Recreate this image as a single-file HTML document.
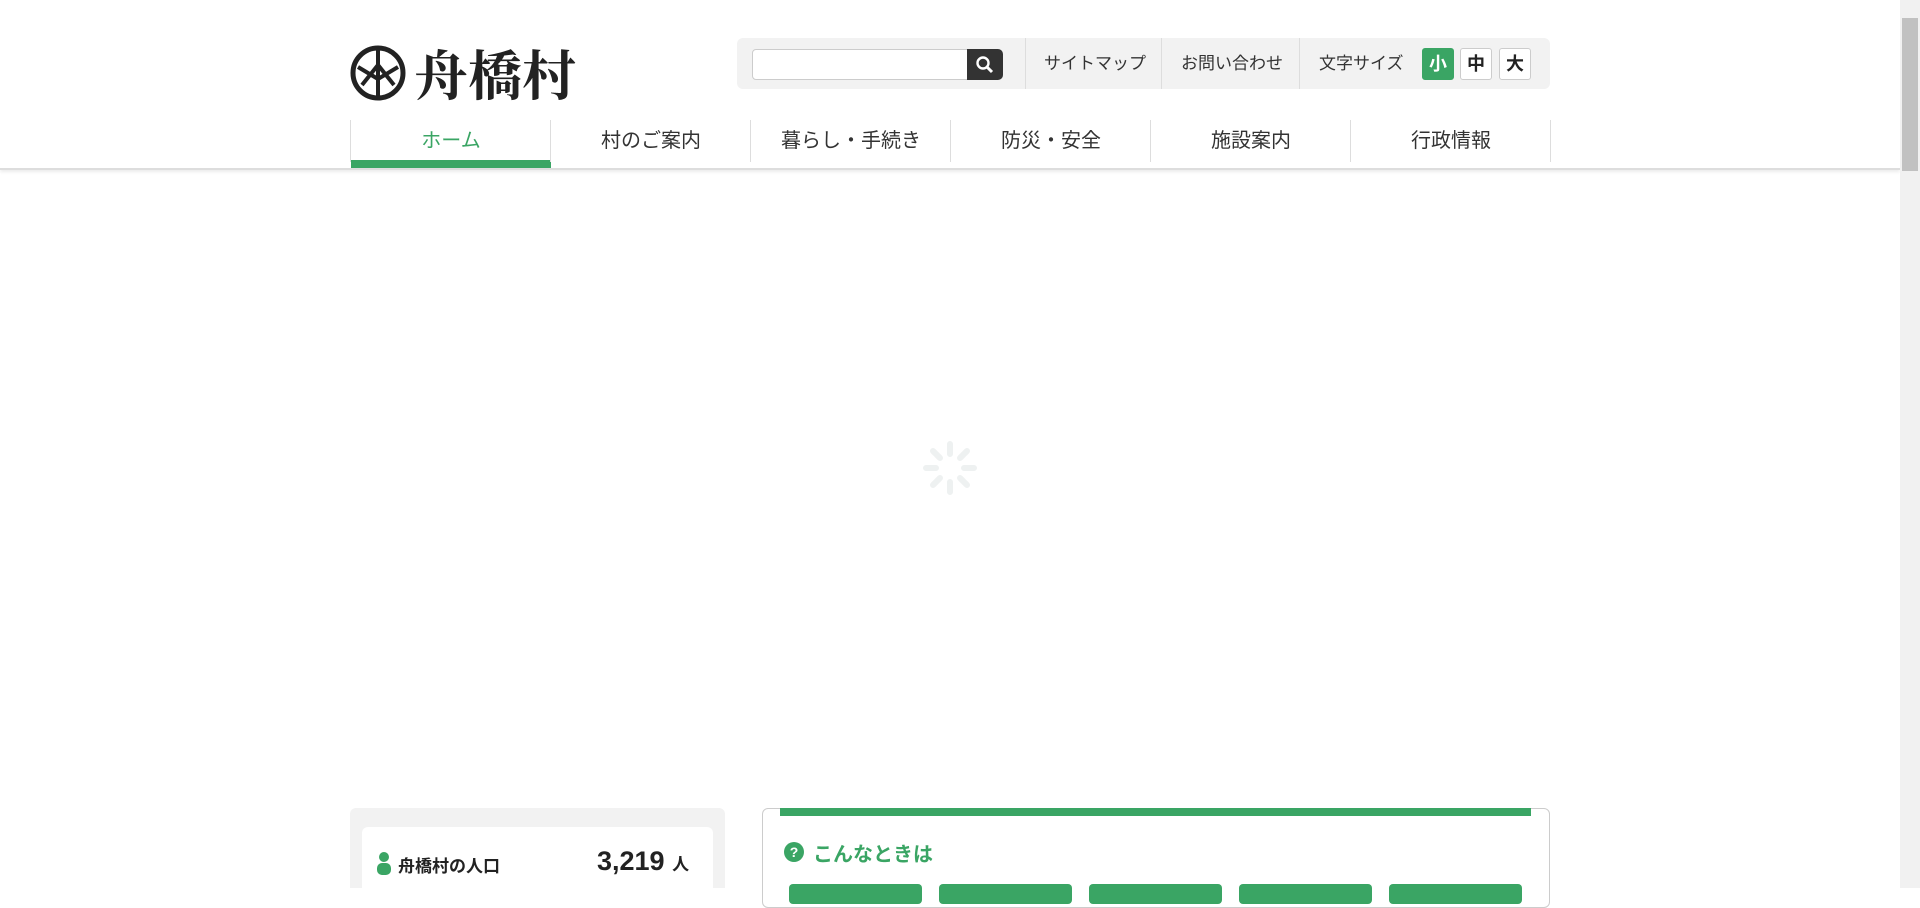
<!DOCTYPE html>
<html><head><meta charset="utf-8"><style>
*{margin:0;padding:0;box-sizing:border-box}
body{width:1920px;height:888px;overflow:hidden;background:#fff;font-family:"Liberation Sans","Noto Sans CJK JP",sans-serif;color:#333;position:relative}
.a{position:absolute}
.hdr{left:0;top:0;width:1900px;height:170px;border-bottom:2px solid #ddd;box-shadow:0 2px 3px rgba(0,0,0,.08)}
.logo{left:350px;top:34px;font-family:"Noto Serif CJK SC",serif;font-size:54px;font-weight:700;color:#222;display:flex;align-items:center;gap:8px;letter-spacing:0px}
.util{left:737px;top:38px;width:813px;height:51px;background:#f2f2f2;border-radius:6px}
.inp{left:752px;top:49px;width:216px;height:31px;background:#fff;border:1px solid #ccc;border-radius:4px 0 0 4px}
.sbtn{left:967px;top:49px;width:36px;height:31px;background:#333;border-radius:0 5px 5px 0}
.div{top:38px;width:1px;height:51px;background:#ddd}
.ut{top:49px;font-size:17px;color:#333}
.fb{top:48px;width:32px;height:32px;border:1px solid #ccc;background:#fff;border-radius:3px;font-weight:bold;font-size:18px;text-align:center;line-height:30px;color:#222}
.nav{top:123px;height:48px;font-size:20px;text-align:center;line-height:36px}
.ns{top:120px;width:1px;height:42px;background:#ddd}
</style></head><body>
<div class="a hdr"></div>
<div class="a logo"><svg width="56" height="56" viewBox="0 0 56 56"><circle cx="28" cy="28" r="25" fill="none" stroke="#222" stroke-width="5"/><path d="M28 5 L28 51 M8 22 L28 34 L48 22 M12 40 L28 20 L44 40" stroke="#222" stroke-width="4" fill="none"/></svg><span>舟橋村</span></div>
<div class="a util"></div>
<div class="a inp"></div>
<div class="a sbtn"><svg width="36" height="31" viewBox="0 0 36 31"><circle cx="16" cy="14" r="5.5" fill="none" stroke="#fff" stroke-width="2.4"/><path d="M20 18 L25 23" stroke="#fff" stroke-width="3"/></svg></div>
<div class="a div" style="left:1025px"></div>
<div class="a ut" style="left:1044px">サイトマップ</div>
<div class="a div" style="left:1161px"></div>
<div class="a ut" style="left:1181px">お問い合わせ</div>
<div class="a div" style="left:1299px"></div>
<div class="a ut" style="left:1319px">文字サイズ</div>
<div class="a fb" style="left:1422px;background:#3aa564;border-color:#3aa564;color:#fff">小</div>
<div class="a fb" style="left:1460px">中</div>
<div class="a fb" style="left:1499px">大</div>
<div class="a ns" style="left:350px"></div>
<div class="a nav" style="left:351px;width:200px;color:#3aa564">ホーム</div>
<div class="a" style="left:351px;top:160px;width:200px;height:8px;background:#3aa564"></div>
<div class="a ns" style="left:550px"></div>
<div class="a nav" style="left:551px;width:200px">村のご案内</div>
<div class="a ns" style="left:750px"></div>
<div class="a nav" style="left:751px;width:200px">暮らし・手続き</div>
<div class="a ns" style="left:950px"></div>
<div class="a nav" style="left:951px;width:200px">防災・安全</div>
<div class="a ns" style="left:1150px"></div>
<div class="a nav" style="left:1151px;width:200px">施設案内</div>
<div class="a ns" style="left:1350px"></div>
<div class="a nav" style="left:1351px;width:200px">行政情報</div>
<div class="a ns" style="left:1550px"></div>
<svg class="a" style="left:920px;top:438px" width="60" height="60" viewBox="0 0 60 60"><g stroke="#eef1f1" stroke-width="6" stroke-linecap="round"><path d="M30 6v10M30 44v10M6 30h10M44 30h10M13 13l7 7M40 40l7 7M13 47l7-7M40 20l7-7"/></g></svg>
<div class="a" style="left:1900px;top:0;width:20px;height:888px;background:#f1f1f1"></div>
<div class="a" style="left:1902px;top:18px;width:16px;height:153px;background:#c1c1c1"></div>
<div class="a" style="left:350px;top:808px;width:375px;height:80px;background:#f2f2f2;border-radius:6px 6px 0 0"></div>
<div class="a" style="left:362px;top:827px;width:351px;height:61px;background:#fff;border-radius:6px 6px 0 0"></div>
<svg class="a" style="left:376px;top:851px" width="16" height="24" viewBox="0 0 16 24"><circle cx="8" cy="6" r="5" fill="#3aa564"/><rect x="1" y="12" width="14" height="12" rx="5" fill="#3aa564"/></svg>
<div class="a" style="left:398px;top:852px;font-size:17px;font-weight:bold;color:#222">舟橋村の人口</div>
<div class="a" style="left:597px;top:846px;font-size:27px;font-weight:bold;color:#222">3,219 <span style="font-size:17px">人</span></div>
<div class="a" style="left:762px;top:808px;width:788px;height:100px;border:1px solid #ccc;border-radius:6px"></div>
<div class="a" style="left:780px;top:808px;width:751px;height:8px;background:#3aa564"></div>
<svg class="a" style="left:784px;top:842px" width="20" height="20" viewBox="0 0 20 20"><circle cx="10" cy="10" r="10" fill="#3aa564"/><text x="10" y="15" font-size="14" font-weight="bold" fill="#fff" text-anchor="middle" font-family="Liberation Sans">?</text></svg>
<div class="a" style="left:813px;top:838px;font-size:20px;font-weight:bold;color:#3aa564">こんなときは</div>
<div class="a" style="left:789px;top:884px;width:133px;height:20px;background:#3aa564;border-radius:4px"></div>
<div class="a" style="left:939px;top:884px;width:133px;height:20px;background:#3aa564;border-radius:4px"></div>
<div class="a" style="left:1089px;top:884px;width:133px;height:20px;background:#3aa564;border-radius:4px"></div>
<div class="a" style="left:1239px;top:884px;width:133px;height:20px;background:#3aa564;border-radius:4px"></div>
<div class="a" style="left:1389px;top:884px;width:133px;height:20px;background:#3aa564;border-radius:4px"></div>
</body></html>
